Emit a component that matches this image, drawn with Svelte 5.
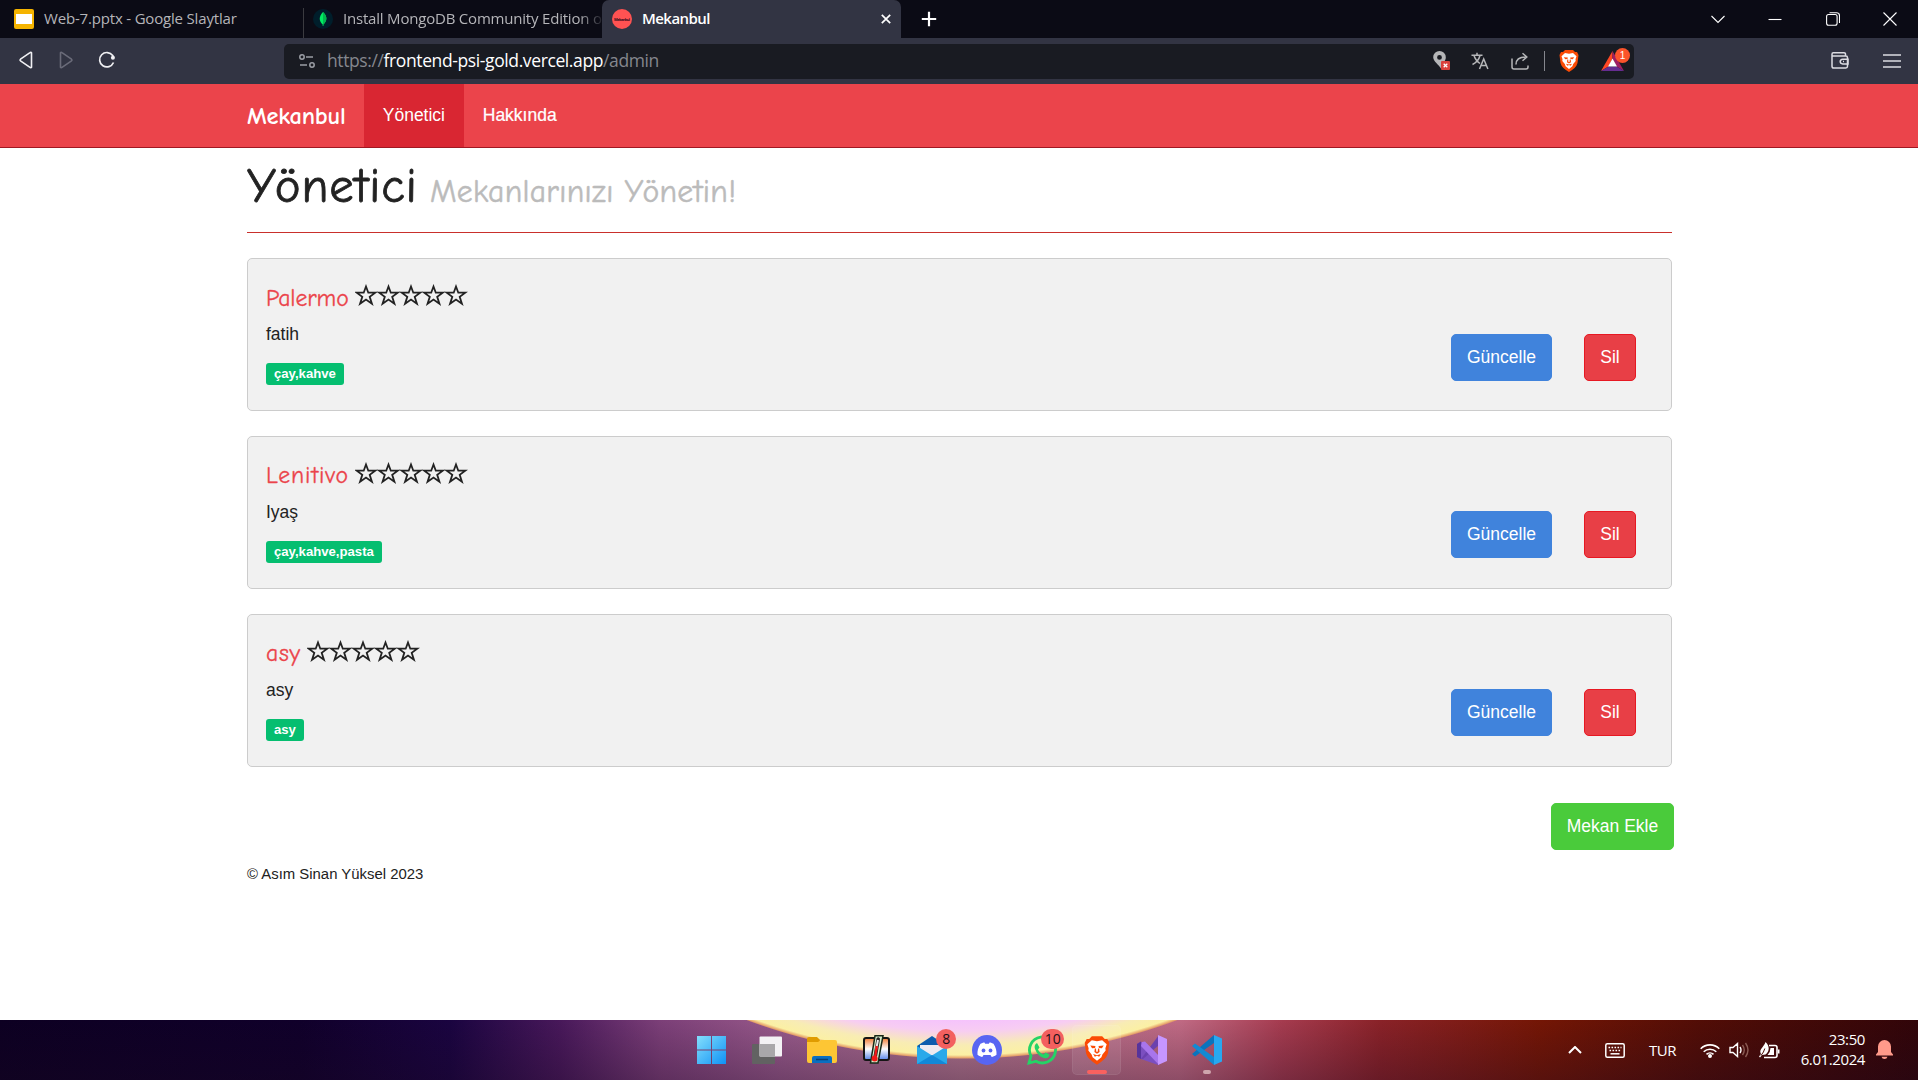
<script>
  const places = [
    { name: 'Palermo', address: 'fatih', tags: 'çay,kahve' },
    { name: 'Lenitivo', address: 'Iyaş', tags: 'çay,kahve,pasta' },
    { name: 'asy', address: 'asy', tags: 'asy' }
  ];
  const stars = [0, 1, 2, 3, 4];
</script>

{#snippet lion()}
  <path d="M6 1h8l2 2 2 0 1.500 3-1 8c-1 4-4 6-8.500 9-4.500-3-7.500-5-8.500-9L.5 6 2 3h2z" fill="#fb4b05" />
  <path d="M6 4l4 .8L14 4l3.500 3.200-1 3 .2 1.800-2.500 3-.8 2.300L10 20l-3.400-2.700-.8-2.300-2.500-3 .2-1.800-1-3z" fill="#fff" />
  <path d="M4.800 8.200l4 .4-.3 1.500-2.300.2zM15.200 8.200l-4 .4.300 1.500 2.300.2zM8.300 10.500h.9l.2 2.200.6.5.6-.5.2-2.200h.9l.3 2.700-2 1.300-2-1.300zM7 14.800l3 .8 3-.8-1.300 2L10 16l-1.700.8z" fill="#fb4b05" />
{/snippet}

<div class="screen">
  <header class="tabs">
    <div class="tab first">
      <svg width="20" height="20" viewBox="0 0 20 20"><rect width="20" height="20" rx="2" fill="#f5b400" /><rect x="2" y="5" width="16" height="10" fill="#fff" /></svg>
      <span class="t1">Web-7.pptx - Google Slaytlar</span>
    </div>
    <div class="tab second">
      <svg width="20" height="20" viewBox="0 0 20 20"><circle cx="10" cy="10" r="10" fill="#001e2b" /><path d="M10 3c5 5 4 9 .3 12.500V17h-.6v-1.500C6 12 5.500 8 10 3z" fill="#00ed64" /><path d="M10 3v14h.3v-1.500C14 12 15 8 10 3z" fill="#00b84e" /></svg>
      <span class="t2">Install MongoDB Community Edition o</span>
    </div>
    <div class="tab active">
      <svg width="20" height="20" viewBox="0 0 20 20"><circle cx="10" cy="10" r="10" fill="#ff5252" /><text x="2" y="11.500" font-size="4" font-weight="700" fill="#3a1020" textLength="16">Mekanbul</text></svg>
      <span class="t3">Mekanbul</span>
      <svg class="x" width="10" height="10" viewBox="0 0 10 10"><path d="M.8.8l8.400 8.400M9.200.8L.8 9.200" stroke="#fff" stroke-width="1.700" /></svg>
    </div>
    <svg class="plus" width="16" height="16" viewBox="0 0 16 16"><path d="M8 .8v14.400M.8 8h14.400" stroke="#fff" stroke-width="2.200" /></svg>
    <div class="win">
      <svg viewBox="0 0 14 14"><path d="M.5 4L7 10.500 13.500 4" /></svg>
      <svg viewBox="0 0 14 14"><path d="M.5 7.500h13" /></svg>
      <svg viewBox="0 0 14 14"><rect x=".6" y="2.500" width="10.500" height="10.800" rx="2" /><path d="M3.500.7h7a3 3 0 0 1 3 3V11" /></svg>
      <svg viewBox="0 0 14 14"><path d="M.5.5l13 13M13.500.5l-13 13" /></svg>
    </div>
  </header>

  <div class="toolbar">
    <div class="nav">
      <svg width="14" height="18" viewBox="0 0 14 18" fill="none" stroke="#f0f0f3" stroke-width="1.600" stroke-linejoin="round"><path d="M12.500 1.800v14.400q-.6.9-1.500.2L1.500 9.800q-.8-.8 0-1.600L11 1.600q.9-.7 1.500.2z" /></svg>
      <svg width="14" height="18" viewBox="0 0 14 18" fill="none" stroke="#6a6b79" stroke-width="1.600" stroke-linejoin="round"><path d="M1.500 1.800v14.400q.6.900 1.500.2l9.500-6.600q.8-.8 0-1.600L3 1.600q-.9-.7-1.500.2z" /></svg>
      <svg width="18" height="18" viewBox="0 0 18 18" fill="none"><path d="M15.500 11.500A7.200 7.200 0 1 1 14.700 4.500l1 2" stroke="#f0f0f3" stroke-width="1.700" /><circle cx="14.900" cy="6.800" r="2" fill="#f0f0f3" /></svg>
    </div>
    <div class="url">
      <svg width="16" height="16" viewBox="0 0 16 16" fill="none" stroke="#9b9ea5" stroke-width="1.500"><circle cx="3" cy="4" r="2.200" /><path d="M7 4h7M1 12h7" /><circle cx="13" cy="12" r="2.200" /></svg>
      <span class="addr"><i>https://</i>frontend-psi-gold.vercel.app<i>/admin</i></span>
      <div class="actions">
        <svg width="17" height="20" viewBox="0 0 17 20"><path fill-rule="evenodd" d="M6.500 0a6.300 6.300 0 0 1 6.300 6.300c0 4-3 5-4.800 11.200C6 14 .2 10.500.2 6.300A6.300 6.300 0 0 1 6.500 0zm0 4a2.400 2.400 0 1 0 0 4.800 2.400 2.400 0 0 0 0-4.800z" fill="#b5b6b8" /><rect x="8" y="10" width="9" height="9" rx="1" fill="#d9413b" /><path d="M10.700 12.700l3.600 3.600m0-3.600l-3.600 3.600" stroke="#fff" stroke-width="1.300" /></svg>
        <svg width="18" height="18" viewBox="0 0 18 18" fill="none" stroke="#b5b6b8" stroke-width="1.500"><path d="M.5 3.300h11M6 .8v2.500M3 3.500c1 3.500 3 6 6 8M9 3.500c-1 4-3.500 7-7.500 9M8.500 17l4.200-10 4.200 10M10 13.500h5.500" /></svg>
        <svg width="18" height="18" viewBox="0 0 18 18" fill="none" stroke="#b5b6b8" stroke-width="1.500"><path d="M1 6.500v8.500q0 2 2 2h12q2 0 2-2v-1.500M5 12.500c0-5 3-7.500 9.500-7.500M11.500 1.200L15.800 5l-4.300 3.800" /></svg>
        <b class="bar"></b>
        <svg width="20" height="24" viewBox="0 0 20 24">{@render lion()}</svg>
        <div class="bat">
          <svg width="24" height="20" viewBox="0 0 24 20"><path d="M11.500 0L0 20l7.500-4.500 4-8z" fill="#ff4724" /><path d="M11.500 0L23 20l-7.500-4.500-4-8z" fill="#9e1f63" /><path d="M0 20h23l-7.500-4.500h-8z" fill="#662d91" /><path d="M11.500 7.500l4.500 8H7z" fill="#fff" /></svg>
          <em>1</em>
        </div>
      </div>
    </div>
    <div class="right">
      <svg width="18" height="17" viewBox="0 0 18 17" fill="none" stroke="#dcdce2" stroke-width="1.500"><path d="M14.500 4V2.200q0-1.400-1.400-1.400H2.300Q1 .8 1 2.200v12Q1 16 2.800 16h12q1.700 0 1.700-1.700V5.700Q16.500 4 14.800 4H1" /><path d="M17 7.200h-5.200q-2.600.2-2.600 2.300t2.600 2.400H17z" /><path d="M12 9.500h1" /></svg>
      <svg width="18" height="14" viewBox="0 0 18 14" stroke="#dcdce2" stroke-width="1.600"><path d="M0 1h18M0 7h18M0 13h18" /></svg>
    </div>
  </div>

  <nav class="site">
    <span class="brand">Mekanbul</span>
    <span class="link on">Yönetici</span>
    <span class="link">Hakkında</span>
  </nav>

  <main>
    <h1><span class="title">Yönetici</span> <small>Mekanlarınızı Yönetin!</small></h1>
    {#each places as p}
      <section class="card">
        <div class="info">
          <h4>
            <span class="name" class:wide={p.name === 'Lenitivo'} class:short={p.name === 'asy'}>{p.name}</span>
            <svg class="stars" width="113" height="22" viewBox="0 0 113 22" fill="none" stroke="#222" stroke-width="1.800">
              {#each stars as s}
                <path transform="translate({s * 22.5} 0)" d="M11 2.500l2.300 6.200h7l-5.600 4.200 2.200 6.800L11 15.500l-5.900 4.200 2.200-6.800L1.700 8.700h7z" />
              {/each}
            </svg>
          </h4>
          <p>{p.address}</p>
          <span class="label">{p.tags}</span>
        </div>
        <div class="buttons">
          <button class="update">Güncelle</button>
          <button class="delete">Sil</button>
        </div>
      </section>
    {/each}
    <div class="add"><button>Mekan Ekle</button></div>
    <footer>© Asım Sinan Yüksel 2023</footer>
  </main>

  <div class="taskbar">
    <div class="apps">
      <div class="app"><svg width="30" height="30" viewBox="0 0 30 30"><defs><linearGradient id="w" gradientUnits="userSpaceOnUse" x1="0" y1="0" x2="30" y2="30"><stop stop-color="#86e0fc" /><stop offset="1" stop-color="#0b8ff5" /></linearGradient></defs><path d="M0 1h14v13.500H0zM15 1h14v13.500H15zM0 15.500h14V29H0zM15 15.500h14V29H15z" fill="url(#w)" /></svg></div>
      <div class="app"><svg width="30" height="30" viewBox="0 0 30 30"><rect y="9" width="23" height="20" rx="1" fill="#626262" /><rect x="7.500" y="1.500" width="22.500" height="20" rx="1" fill="#f3f1f4" /><path d="M7.500 9H23v12.500H7.500z" fill="#a9a7aa" /></svg></div>
      <div class="app"><svg width="30" height="30" viewBox="0 0 30 30"><path d="M0 4q0-2 2-2h8l3 3-2 5H0z" fill="#e09c00" /><path d="M0 7h11l3-2h14q2 0 2 2v19q0 2-2 2H2q-2 0-2-2z" fill="#fdc634" /><path d="M5 28v-5q0-2 2-2h16q2 0 2 2v5z" fill="#0a6fc0" /><path d="M9 24.500h12" stroke="#073f75" stroke-width="1.500" /></svg></div>
      <div class="app"><svg width="30" height="30" viewBox="0 0 30 30"><defs><linearGradient id="t" x2="0" y2="1"><stop stop-color="#f07830" /><stop offset=".5" stop-color="#fff" /><stop offset="1" stop-color="#5684e8" /></linearGradient></defs><rect x="2" y="3" width="25" height="22" rx="2" fill="url(#t)" stroke="#151515" stroke-width="2" /><path d="M13 .8h8L16 28H8.500z" fill="#d9efce" stroke="#182818" stroke-width="1.500" /><path d="M16.200 4L13 23" stroke="#222" stroke-width="3.600" stroke-linecap="round" /><path d="M16 5l-2 10" stroke="#eee" stroke-width="2" /><path d="M14.800 11L13 23" stroke="#f01818" stroke-width="2.400" /><circle cx="12.600" cy="23.500" r="3" fill="#f01818" /></svg></div>
      <div class="app"><svg width="30" height="30" viewBox="0 0 30 30"><path d="M0 11L15 1l15 10v5H0z" fill="#0b5cad" /><path d="M3 10h24v9l-12 8L3 19z" fill="#eceaf0" /><path d="M0 11l15 9.500L30 11v18H0z" fill="#29a9ea" /><path d="M0 29l15-9 15 9z" fill="#1288d8" /></svg><em>8</em></div>
      <div class="app"><svg width="30" height="30" viewBox="0 0 30 30"><circle cx="15" cy="15" r="15" fill="#5865f2" /><path d="M8.500 8.700c2-.9 3-1.100 4-1.200l.6 1.200h3.800l.6-1.200c1 .1 2 .3 4 1.200 2.400 3.600 3.300 7.300 3 11-2 1.500-3.500 2-4.800 2.300l-1.200-2h-7l-1.200 2c-1.300-.3-2.800-.8-4.800-2.300-.3-3.700.6-7.400 3-11z" fill="#fff" /><ellipse cx="11.500" cy="15.500" rx="1.900" ry="2.100" fill="#5865f2" /><ellipse cx="18.500" cy="15.500" rx="1.900" ry="2.100" fill="#5865f2" /></svg></div>
      <div class="app"><svg width="30" height="30" viewBox="0 0 30 30"><path d="M2 28l2-7A13 13 0 1 1 9 26.200z" fill="none" stroke="#25d366" stroke-width="2.800" /><path d="M10 8c-2 1-3 3-2 6 2 5 5 8 9 9 3 .8 5-.2 5.500-3.500L18.500 17.500l-2 2c-3-1.200-4.500-3-5.500-5l1.500-2z" fill="#25d366" /></svg><em class="wide">10</em></div>
      <div class="app current"><svg width="26" height="31" viewBox="0 0 20 24">{@render lion()}</svg></div>
      <div class="app"><svg width="30" height="30" viewBox="0 0 30 30"><path d="M0 9l4-2.500L22 30l-1.500-.3L4 24l-4-2z" fill="#7b4fc0" /><path d="M0 9l4-2.500v17.500L0 22z" fill="#57349b" /><path d="M4 24L22 0v10L6 24z" fill="#6b41ae" /><path d="M5 7l3-.5L22 21v9L4 11z" fill="#a875ec" /><path d="M21 0l9 4v22l-9 4z" fill="#c696ff" /></svg></div>
      <div class="app running"><svg width="30" height="30" viewBox="0 0 30 30"><path d="M0 19l3 2.500L22 8V0z" fill="#0a74bd" /><path d="M0 11l3-2.500L22 22v8z" fill="#138ad3" /><path d="M22 0l8 3.500v23L22 30z" fill="#28a8f0" /></svg></div>
    </div>
    <div class="tray">
      <svg class="caret" width="14" height="8" viewBox="0 0 14 8" fill="none" stroke="#fff" stroke-width="2"><path d="M1 7l6-6 6 6" /></svg>
      <svg class="kb" width="20" height="15" viewBox="0 0 20 15" fill="none" stroke="#fff" stroke-width="1.500"><rect x=".8" y=".8" width="18.400" height="13.400" rx="1.500" /><path d="M3.500 4.500h13M4.500 7.500h11" stroke-dasharray="1.600 1.400" /><path d="M5.500 10.800h9" /></svg>
      <span class="lang">TUR</span>
      <svg class="wifi" width="20" height="15" viewBox="0 0 20 15" fill="none" stroke="#fff" stroke-width="1.600"><path d="M.7 5.800a13 13 0 0 1 18.600 0M3.700 8.800a9 9 0 0 1 12.600 0M6.500 11.400a5 5 0 0 1 7 0" /><circle cx="10" cy="13" r="1.200" fill="#fff" /></svg>
      <svg class="vol" width="21" height="16" viewBox="0 0 21 16" fill="none" stroke="#fff" stroke-width="1.400"><path d="M1 5.500h3l4.500-4v13l-4.500-4H1zM11 5q2 3 0 6" /><path d="M13.500 3q3.500 5 0 10M16.500 1q5 7 0 14" stroke="#8a5a53" /></svg>
      <svg class="bt" width="21" height="17" viewBox="0 0 21 17"><path d="M10 3.500h6q2 0 2 2v8q0 2-2 2H5" fill="none" stroke="#fff" stroke-width="1.600" /><path d="M19 7.500h1.500v4H19zM11.500 6H15v7H8.500q3-3 3-7zM6.500 0c4 3.500 4.500 9 0 12.500L3 13 1 15.500 0 14.500l2-2.500C-.5 7 4.500 6 6.500 0z" fill="#fff" /><path d="M2 13.500Q5 10 5.800 6.500" fill="none" stroke="#4b0b05" /></svg>
      <div class="clock"><span>23:50</span><span>6.01.2024</span></div>
      <svg class="bell" width="17" height="20" viewBox="0 0 17 20"><path d="M8.500 0a6.500 6.500 0 0 1 6.500 6.500V12l2 2.500v1H0v-1L2 12V6.500A6.500 6.500 0 0 1 8.500 0zM5.500 16.800h6q-.6 2.200-3 2.200t-3-2.200z" fill="#ff9a8a" /></svg>
    </div>
  </div>
</div>

<style>
  :global(body) { margin: 0; background: #fff; }
  .screen { width: 1918px; height: 1080px; display: flex; flex-direction: column; overflow: hidden; background: #fff; font-family: 'Liberation Sans', Arial, sans-serif; font-size: 17.5px; color: #222; }
  .screen * { box-sizing: border-box; }
  svg { display: block; flex: none; }
  em, i { font-style: normal; }
  .tabs { height: 38px; flex: none; background: #0b0b15; display: flex; align-items: center; font: 15px 'Open Sans', sans-serif; color: #b5b5b9; white-space: nowrap; }
  .tab { display: flex; align-items: center; gap: 10px; height: 38px; }
  .tab span { padding-bottom: 2px; }
  .first { width: 303px; padding-left: 14px; }
  .second { width: 299px; padding-left: 9px; border-left: 1px solid #3b3b40; border-image: linear-gradient(transparent 9px, #3b3b40 9px) 1; }
  .second span { mask-image: linear-gradient(90deg, #000 235px, transparent 262px); }
  .active { width: 299px; background: #323443; border-radius: 7px 7px 0 0; padding: 0 10px; color: #fff; font-weight: 600; }
  .x { margin-left: auto; }
  .plus { margin-left: 20px; }
  .t1 { letter-spacing: -0.18px; }
  .t2 { letter-spacing: -0.2px; }
  .t3 { letter-spacing: -0.55px; }
  .win { margin-left: auto; display: flex; gap: 43.5px; padding-right: 21px; }
  .win svg { width: 14px; height: 14px; fill: none; stroke: #fff; stroke-width: 1.1; }
  .toolbar { height: 46px; flex: none; background: #323443; display: flex; align-items: center; }
  .nav { width: 284px; padding: 0 0 2px 19px; display: flex; gap: 26px; align-items: center; }
  .nav svg:last-child { margin-left: -1px; }
  .url { width: 1350px; height: 35px; background: #191b22; border-radius: 5px; display: flex; align-items: center; padding: 0 9px 1px 15px; }
  .addr { margin-left: 12px; padding-bottom: 1px; font: 17.5px 'Open Sans', sans-serif; letter-spacing: -0.39px; color: #fff; white-space: nowrap; }
  .addr i { color: #85878e; }
  .actions { margin-left: auto; display: flex; align-items: center; }
  .actions > svg:nth-child(2) { margin-left: 21px; }
  .actions > svg:nth-child(3) { margin-left: 22px; }
  .bar { width: 1px; height: 20px; margin: 0 14px 0 15px; background: #85878e; }
  .bat { position: relative; margin-left: 22px; }
  .bat em { position: absolute; left: 14px; top: -3px; width: 15px; height: 15px; border-radius: 8px; background: #fb542b; color: #fff; font: 10px/15px 'Liberation Sans', sans-serif; text-align: center; }
  .right { margin-left: auto; display: flex; align-items: center; gap: 34px; padding: 0 17px 1px 0; }
  .site { height: 64px; flex: none; display: flex; background: #eb444b; border-bottom: 1px solid #a01822; padding-left: 247px; color: #fff; }
  .brand { width: 117px; font: 700 24.5px/64px 'Comic Sans MS', 'Comic Neue', Lato, sans-serif; letter-spacing: -0.25px; }
  .link { padding: 0 18.75px; line-height: 63px; -webkit-text-stroke: 0.2px #fff; }
  .on { background: #d92632; width: 100px; -webkit-text-stroke: 0; }
  main { width: 1425px; margin-left: 247px; flex: 1; display: flex; flex-direction: column; }
  h1 { margin: 0 0 25.1px; height: 85px; border-bottom: 1px solid #c9302c; font: 400 48.75px/77px 'Comic Sans MS', 'Comic Neue', Lato, sans-serif; white-space: nowrap; display: flex; align-items: baseline; -webkit-text-stroke: 0.8px; }
  .title { width: 183px; letter-spacing: 0.85px; }
  h1 small { font-size: 31.7px; letter-spacing: 0.3px; color: #bbb; -webkit-text-stroke: 0.5px; }
  .card { height: 153px; margin-bottom: 24.75px; flex: none; border: 1px solid #ccc; border-radius: 5px; background: #f1f1f1; display: flex; justify-content: space-between; padding: 24px 35px 0 18px; }
  h4 { margin: 0; height: 30px; display: flex; align-items: center; gap: 6px; font: 400 23.75px/30px 'Comic Sans MS', 'Comic Neue', Lato, sans-serif; color: #eb444b; }
  .name { letter-spacing: -0.1px; padding-top: 1px; -webkit-text-stroke: 0.3px; }
  .name.wide { letter-spacing: 0.87px; }
  .name.short { letter-spacing: 0.7px; }
  .stars { margin-top: -5.6px; }
  p { margin: 9px 0 15px; line-height: 25px; height: 25px; }
  .label { display: inline-block; height: 22px; padding: 0 8px; border-radius: 3px; background: #05be70; color: #fff; font-size: 13.15px; font-weight: 700; line-height: 21px; }
  .buttons { display: flex; gap: 32px; padding-top: 50.6px; }
  button { height: 47px; border: 1px solid #4083dc; border-radius: 5px; background: #4083dc; color: #fff; font: 17.5px 'Liberation Sans', Arial, sans-serif; padding: 0 15px; }
  .update { width: 101px; }
  .delete { width: 52px; background: #e83f46; border-color: #e71822; }
  .add { margin: 11.65px -2px 0 0; display: flex; justify-content: flex-end; }
  .add button { width: 123px; padding: 0; background: #4acb3b; border-color: #4acb3b; }
  footer { margin-top: 14px; font-size: 14.9px; line-height: 20px; }
  .taskbar { height: 60px; flex: none; display: flex; align-items: center; justify-content: space-between; color: #fff;
    background: radial-gradient(circle at 962px -583px, #f5c3fc 583px, #f7cdf2 594px, #f8ecb4 608px, #fbf0a4 618px, #e6a069 621px, transparent 622px),
      linear-gradient(90deg, transparent 480px, #1d0a1a00 560px, transparent), linear-gradient(180deg, transparent, #1808204d),
      linear-gradient(90deg, #0d0022, #10002a 300px, #1a0440 450px, #48185a 560px, #7c3f78 660px, #97598a 780px, #b0748e 960px, #c06a84 1180px, #a63c50 1280px, #8a2228 1380px, #741605 1540px, #520d06 1700px, #310509); }
  .apps { display: flex; padding-left: 684px; }
  .app { width: 55.05px; height: 60px; display: flex; align-items: center; justify-content: center; position: relative; }
  .app em { position: absolute; left: 32px; top: 9px; min-width: 20px; height: 20px; border-radius: 10px; background: #f3605f; color: #1b1018; font: 14px/20px 'Open Sans', sans-serif; text-align: center; }
  .app .wide { left: 27px; width: 23px; }
  .current::before { content: ''; position: absolute; inset: 5px 3px; border-radius: 5px; background: #ffffff14; border: 1px solid #ffffff10; }
  .current svg { position: relative; }
  .current::after, .running::after { content: ''; position: absolute; bottom: 6px; width: 20px; height: 4px; border-radius: 2px; background: #f9615f; }
  .running::after { width: 8px; background: #cfa5ad; }
  .tray { display: flex; align-items: center; padding-right: 25px; font: 15px 'Open Sans', sans-serif; }
  .kb { margin-left: 23px; }
  .lang { margin-left: 24px; width: 28px; letter-spacing: -0.5px; }
  .wifi { margin-left: 23px; }
  .vol { margin-left: 9px; }
  .bt { margin-left: 9px; }
  .clock { margin-left: 14px; width: 71px; padding-bottom: 2px; display: flex; flex-direction: column; align-items: flex-end; line-height: 20px; letter-spacing: -0.4px; }
  .bell { margin-left: 11px; }
</style>
